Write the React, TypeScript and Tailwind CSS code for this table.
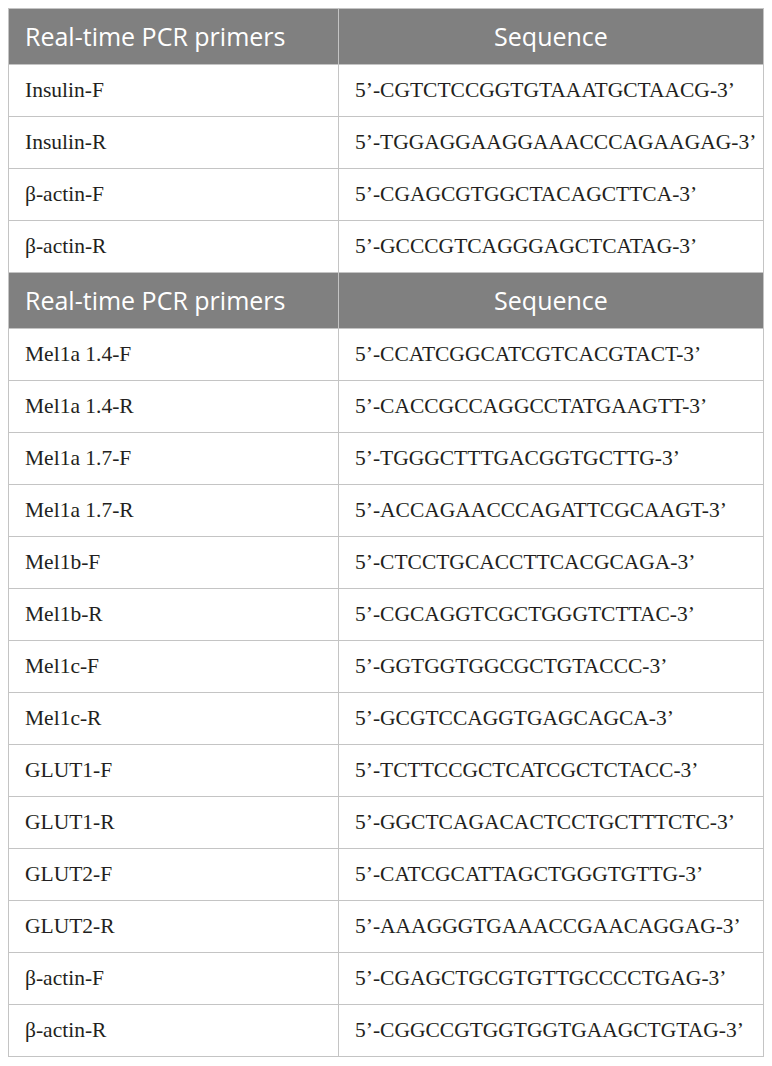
const sections: { rows: [string, string][] }[] = [
  {
    rows: [
      ["Insulin-F", "5’-CGTCTCCGGTGTAAATGCTAACG-3’"],
      ["Insulin-R", "5’-TGGAGGAAGGAAACCCAGAAGAG-3’"],
      ["β-actin-F", "5’-CGAGCGTGGCTACAGCTTCA-3’"],
      ["β-actin-R", "5’-GCCCGTCAGGGAGCTCATAG-3’"],
    ],
  },
  {
    rows: [
      ["Mel1a 1.4-F", "5’-CCATCGGCATCGTCACGTACT-3’"],
      ["Mel1a 1.4-R", "5’-CACCGCCAGGCCTATGAAGTT-3’"],
      ["Mel1a 1.7-F", "5’-TGGGCTTTGACGGTGCTTG-3’"],
      ["Mel1a 1.7-R", "5’-ACCAGAACCCAGATTCGCAAGT-3’"],
      ["Mel1b-F", "5’-CTCCTGCACCTTCACGCAGA-3’"],
      ["Mel1b-R", "5’-CGCAGGTCGCTGGGTCTTAC-3’"],
      ["Mel1c-F", "5’-GGTGGTGGCGCTGTACCC-3’"],
      ["Mel1c-R", "5’-GCGTCCAGGTGAGCAGCA-3’"],
      ["GLUT1-F", "5’-TCTTCCGCTCATCGCTCTACC-3’"],
      ["GLUT1-R", "5’-GGCTCAGACACTCCTGCTTTCTC-3’"],
      ["GLUT2-F", "5’-CATCGCATTAGCTGGGTGTTG-3’"],
      ["GLUT2-R", "5’-AAAGGGTGAAACCGAACAGGAG-3’"],
      ["β-actin-F", "5’-CGAGCTGCGTGTTGCCCCTGAG-3’"],
      ["β-actin-R", "5’-CGGCCGTGGTGGTGAAGCTGTAG-3’"],
    ],
  },
];

export default function App() {
  return (
    <div className="bg-white p-2 w-[772px] min-h-[1066px]">
      <table className="w-[755px] table-fixed border-collapse border border-[#c4c4c4]">
        <colgroup>
          <col className="w-[330px]" />
          <col className="w-[425px]" />
        </colgroup>
        {sections.map((sec, si) => (
          <tbody key={si}>
            <tr className="bg-[#808080] text-white h-[56px]">
              <th className="border border-[#c4c4c4] px-4 text-left font-normal text-[25px] whitespace-nowrap font-['Open_Sans',sans-serif]">
                Real-time PCR primers
              </th>
              <th className="border border-[#c4c4c4] px-4 text-center font-normal text-[25px] whitespace-nowrap font-['Open_Sans',sans-serif]">
                Sequence
              </th>
            </tr>
            {sec.rows.map(([name, seq], i) => (
              <tr key={i} className="h-[52px] text-[#231f20] text-[21.5px] whitespace-nowrap font-['Liberation_Serif',serif]">
                <td className="border border-[#c4c4c4] px-4">{name}</td>
                <td className="border border-[#c4c4c4] px-4">{seq}</td>
              </tr>
            ))}
          </tbody>
        ))}
      </table>
    </div>
  );
}
